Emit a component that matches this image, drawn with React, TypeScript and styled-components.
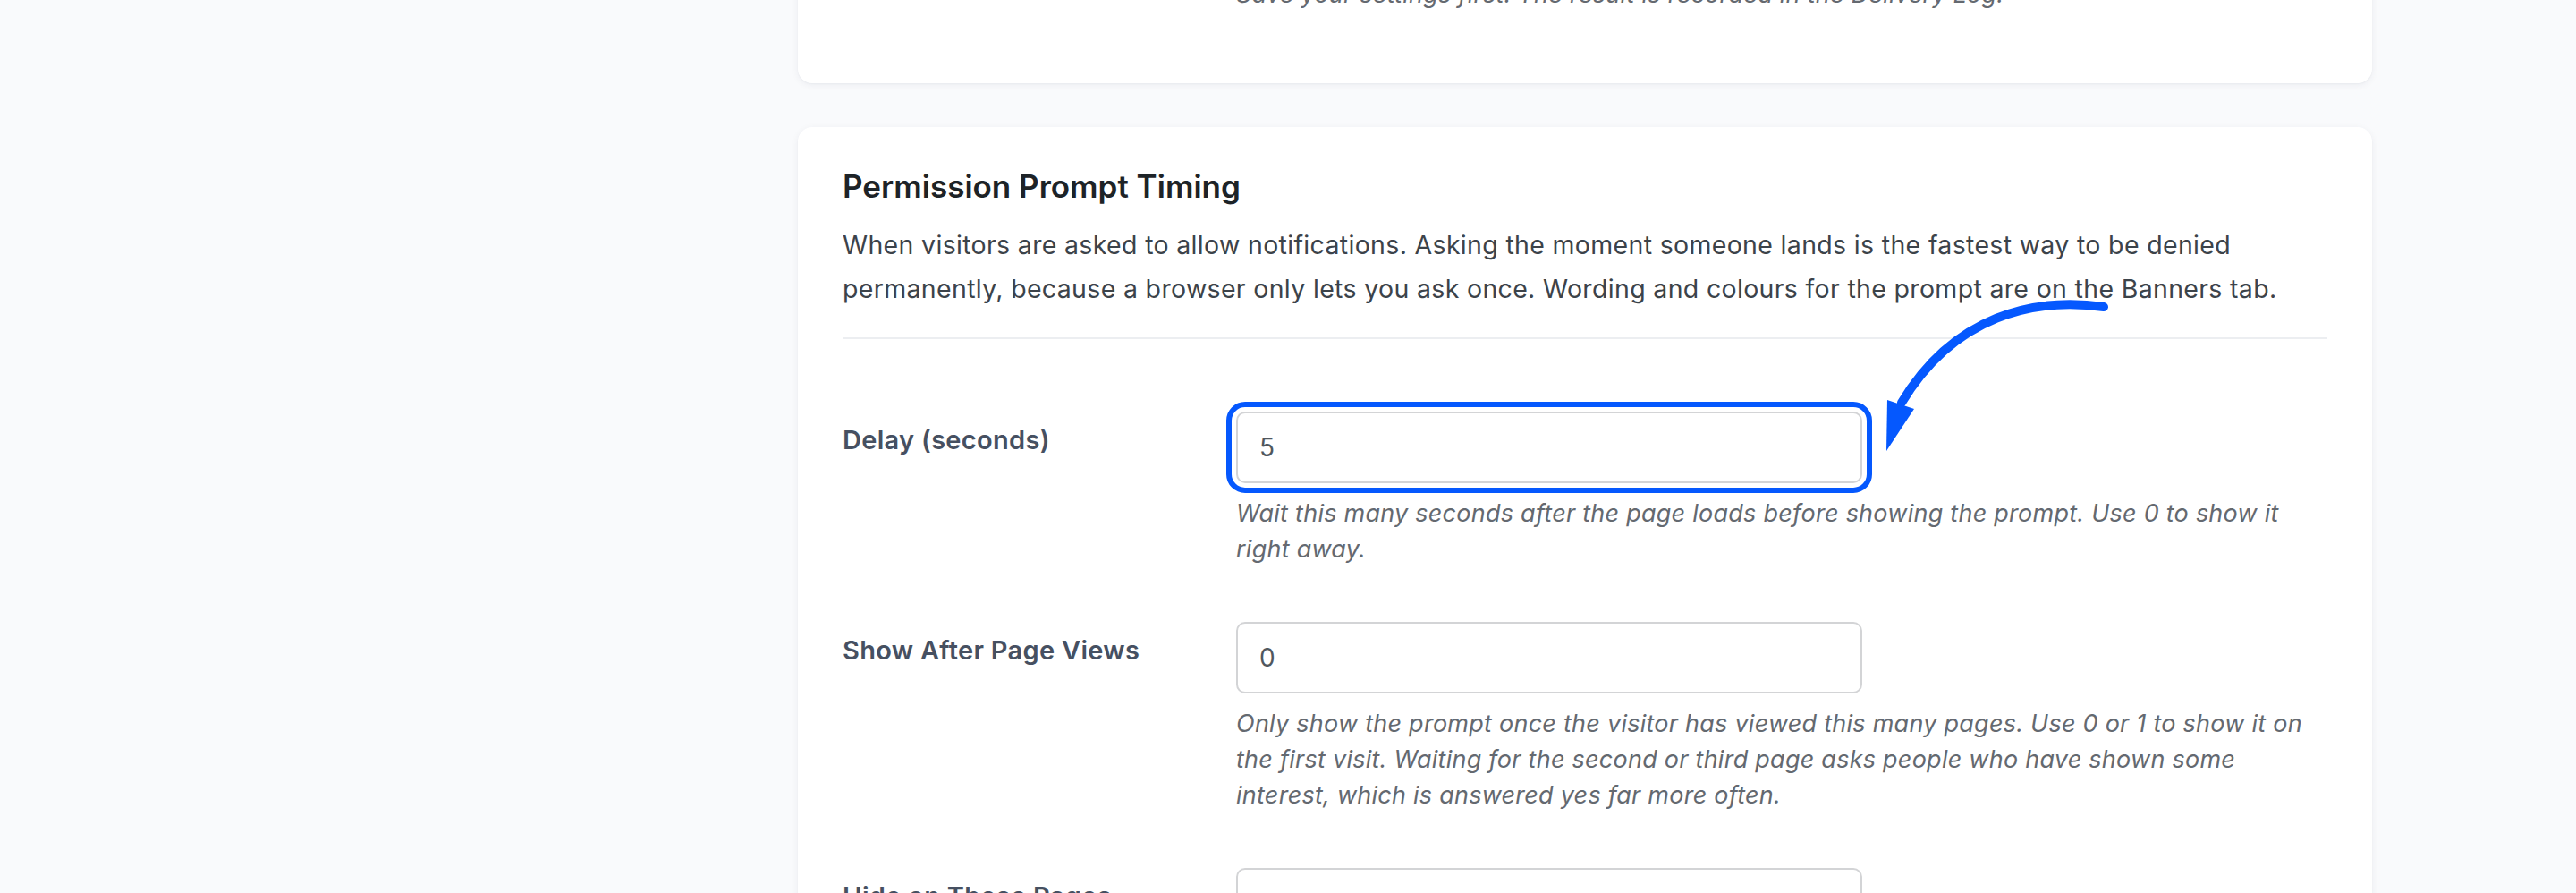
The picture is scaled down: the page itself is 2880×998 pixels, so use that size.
import styled, { createGlobalStyle } from "styled-components";

const GlobalStyle = createGlobalStyle`
    html, body {
        margin: 0;
        padding: 0;
        background: #f9fafc;
    }
    body {
        font-family: Inter, "Noto Sans", "Liberation Sans", sans-serif;
        -webkit-font-smoothing: antialiased;
    }
    * { box-sizing: border-box; }
`

const Viewport = styled.div`
    height: 998px;
    overflow: hidden;
`

// the page is scrolled down a bit, so the first card is mostly out of view
const Page = styled.main<{ $scroll: number }>`
    margin-top: ${p => -p.$scroll}px;
    padding-left: 892px;
    width: 2652px;
    display: flex;
    flex-direction: column;
    gap: 49px;
`

const Card = styled.section<{ $padBottom?: number }>`
    position: relative;
    background: #ffffff;
    border-radius: 16px;
    box-shadow: 0 2px 8px rgba(20, 30, 60, 0.06), 0 1px 2px rgba(20, 30, 60, 0.03);
    padding: 44px 50px ${p => p.$padBottom ?? 50}px;
`

const Title = styled.h2`
    margin: 0;
    font-size: 35px;
    line-height: 44px;
    font-weight: 600;
    color: #1d2327;
`

const Intro = styled.p`
    margin: 19px 0 0;
    font-size: 28.5px;
    line-height: 49px;
    color: #3c434a;
    letter-spacing: 0.33px;
`

const Divider = styled.hr`
    margin: 30px 0 81px;
    border: 0;
    height: 2px;
    background: #eceef1;
`

const FieldRow = styled.div<{ $last?: boolean }>`
    display: grid;
    grid-template-columns: 440px 1fr;
    margin-bottom: ${p => (p.$last ? 0 : 61)}px;
`

const Label = styled.label`
    padding-top: 12px;
    font-size: 29px;
    line-height: 40px;
    font-weight: 600;
    color: #465061;
    letter-spacing: 0.3px;
`

const Field = styled.div`
    position: relative;
    display: flex;
    flex-direction: column;
    align-items: flex-start;
`

const TextInput = styled.input<{ $focused?: boolean }>`
    width: 700px;
    height: 80px;
    padding: 0 24px;
    border: 2px solid #d3d4d6;
    border-radius: 10px;
    background: #ffffff;
    font-family: inherit;
    font-size: 28px;
    color: #50575e;
    outline: ${p => (p.$focused ? "6px solid #0558fe" : "none")};
    outline-offset: 5px;
`

const Help = styled.p<{ $flush?: boolean }>`
    margin: ${p => (p.$flush ? 0 : 14)}px 0 0;
    font-size: 27px;
    line-height: 40px;
    font-style: italic;
    color: #646970;
    letter-spacing: 0.25px;
`

const Annotation = styled.svg`
    position: absolute;
    left: 1203px;
    top: 188px;
    width: 270px;
    height: 180px;
    pointer-events: none;
`

interface SettingProps {
    label: string
    value: string
    help: string
    focused?: boolean
}

const Setting = ({ label, value, help, focused }: SettingProps) => (
    <FieldRow>
        <Label>{label}</Label>
        <Field>
            <TextInput $focused={focused} defaultValue={value} />
            {help && <Help>{help}</Help>}
        </Field>
    </FieldRow>
)

const CurvedArrow = () => (
    <Annotation viewBox="0 0 270 180">
        <path
            d="M257 13 C 180 2, 90 22, 31 120"
            fill="none"
            stroke="#0558fe"
            strokeWidth="10"
            strokeLinecap="round"
        />
        <polygon points="14,174 15,117 45,127" fill="#0558fe" />
    </Annotation>
)

export default function App() {
    return (
        <Viewport>
            <GlobalStyle />
            <Page $scroll={70}>
                <Card $padBottom={79}>
                    <FieldRow $last>
                        <div />
                        <Field>
                            <Help $flush>
                                Save your settings first. The result is recorded in the Delivery Log.
                            </Help>
                        </Field>
                    </FieldRow>
                </Card>

                <Card>
                    <Title>Permission Prompt Timing</Title>
                    <Intro>
                        When visitors are asked to allow notifications. Asking the moment someone lands is the fastest way to be denied
                        permanently, because a browser only lets you ask once. Wording and colours for the prompt are on the Banners tab.
                    </Intro>
                    <Divider />
                    <Setting
                        label="Delay (seconds)"
                        value="5"
                        focused
                        help="Wait this many seconds after the page loads before showing the prompt. Use 0 to show it right away."
                    />
                    <Setting
                        label="Show After Page Views"
                        value="0"
                        help="Only show the prompt once the visitor has viewed this many pages. Use 0 or 1 to show it on the first visit. Waiting for the second or third page asks people who have shown some interest, which is answered yes far more often."
                    />
                    <Setting label="Hide on These Pages" value="" help="" />
                    <CurvedArrow />
                </Card>
            </Page>
        </Viewport>
    )
}
